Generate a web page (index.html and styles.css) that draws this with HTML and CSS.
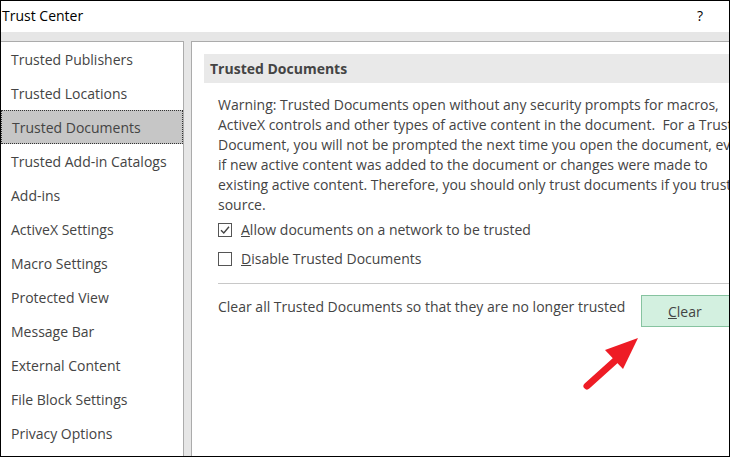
FILE: index.html
```html
<!DOCTYPE html>
<html>
<head>
<meta charset="utf-8">
<link rel="stylesheet" href="styles.css">
</head>
<body>
<div class="frame">
  <div class="titlebar">
    <span class="title">Trust Center</span>
    <span class="help">?</span>
  </div>
  <div class="main">
    <nav class="sidebar">
      <div class="item">Trusted Publishers</div>
      <div class="item">Trusted Locations</div>
      <div class="item selected"><span class="focus">Trusted Documents</span></div>
      <div class="item">Trusted Add-in Catalogs</div>
      <div class="item">Add-ins</div>
      <div class="item">ActiveX Settings</div>
      <div class="item">Macro Settings</div>
      <div class="item">Protected View</div>
      <div class="item">Message Bar</div>
      <div class="item">External Content</div>
      <div class="item">File Block Settings</div>
      <div class="item">Privacy Options</div>
    </nav>
    <section class="content">
      <div class="header">Trusted Documents</div>
      <div class="body">
        <p class="warning">Warning: Trusted Documents open without any security prompts for macros,<br>ActiveX controls and other types of active content in the document.&nbsp; For a Trusted<br>Document, you will not be prompted the next time you open the document, even<br>if new active content was added to the document or changes were made to<br>existing active content. Therefore, you should only trust documents if you trust the<br>source.</p>
        <label class="check"><span class="box checked"><svg viewBox="0 0 14 14" width="14" height="14"><path d="M3 7.2 L5.8 10 L11 3.8" fill="none" stroke="#444" stroke-width="1.4"/></svg></span><span><u>A</u>llow documents on a network to be trusted</span></label>
        <label class="check"><span class="box"></span><span><u>D</u>isable Trusted Documents</span></label>
      </div>
      <div class="sep"></div>
      <div class="clear-row">
        <span class="clear-text">Clear all Trusted Documents so that they are no longer trusted</span>
        <button class="clear-btn"><u>C</u>lear</button>
      </div>
    </section>
  </div>
  <svg class="arrow" width="80" height="70" viewBox="0 0 80 70">
    <line x1="10" y1="60" x2="40" y2="33" stroke="#ee1c25" stroke-width="7" stroke-linecap="round"/>
    <polygon points="61,12 28,24 46,43" fill="#ee1c25"/>
  </svg>
</div>
</body>
</html>
```
FILE: styles.css
```css
* { box-sizing: border-box; }
html, body { margin: 0; padding: 0; }
body {
  font-family: "Segoe UI", "Open Sans", sans-serif;
  color: #444;
  background: #fff;
}
.frame {
  position: relative;
  width: 730px;
  height: 457px;
  border: 1px solid #000;
  overflow: hidden;
  display: flex;
  flex-direction: column;
}
.titlebar {
  height: 31px;
  flex: none;
  display: flex;
  align-items: center;
  justify-content: space-between;
  padding: 0 26px 2px 1px;
  background: #fff;
  color: #000;
  font-size: 14px;
}
.main {
  flex: 1;
  background: #e6e6e6;
  display: flex;
  gap: 7px;
  padding-top: 9px;
  min-height: 0;
}
.sidebar {
  width: 183px;
  flex: none;
  background: #fff;
  border-top: 1px solid #ababab;
  border-right: 1px solid #ababab;
}
.item {
  height: 34px;
  display: flex;
  align-items: center;
  padding-left: 10px;
  font-size: 14px;
  white-space: nowrap;
  color: #444;
}
.item.selected {
  background: #c6c6c6;
  padding-left: 0;
}
.focus {
  display: flex;
  align-items: center;
  width: 100%;
  height: 100%;
  padding-left: 10px;
  border: 1px dotted #333;
}
.content {
  flex: 1;
  background: #fff;
  border-top: 1px solid #ababab;
  border-left: 1px solid #ababab;
  padding: 12px 0 0 12px;
  white-space: nowrap;
  overflow: hidden;
  font-size: 14px;
}
.header {
  height: 29px;
  background: #e9e9e9;
  font-weight: bold;
  display: flex;
  align-items: center;
  padding-left: 6px;
}
.body {
  padding-left: 14px;
}
.warning {
  margin: 12px 0 0 0;
  line-height: 20px;
}
.check {
  display: flex;
  align-items: center;
  gap: 9px;
  height: 29px;
}
.box {
  width: 14px;
  height: 14px;
  border: 1px solid #555;
  background: #fff;
  display: inline-flex;
  flex: none;
}
.box svg { display: block; margin: -1px; }
.sep {
  margin: 10px 0 0 14px;
  height: 1px;
  background: #c8c8c8;
}
.clear-row {
  display: flex;
  align-items: flex-start;
  padding: 11px 0 0 14px;
}
.clear-text {
  flex: none;
  width: 423px;
  line-height: 20px;
  padding-top: 2px;
}
.clear-btn {
  flex: none;
  height: 32px;
  width: 100px;
  background: #d3f0e0;
  border: 1px solid #86c3a0;
  font-family: inherit;
  font-size: 14px;
  color: #444;
  text-align: left;
  padding: 0 0 0 26px;
}
.arrow {
  position: absolute;
  left: 576px;
  top: 325px;
}
```
